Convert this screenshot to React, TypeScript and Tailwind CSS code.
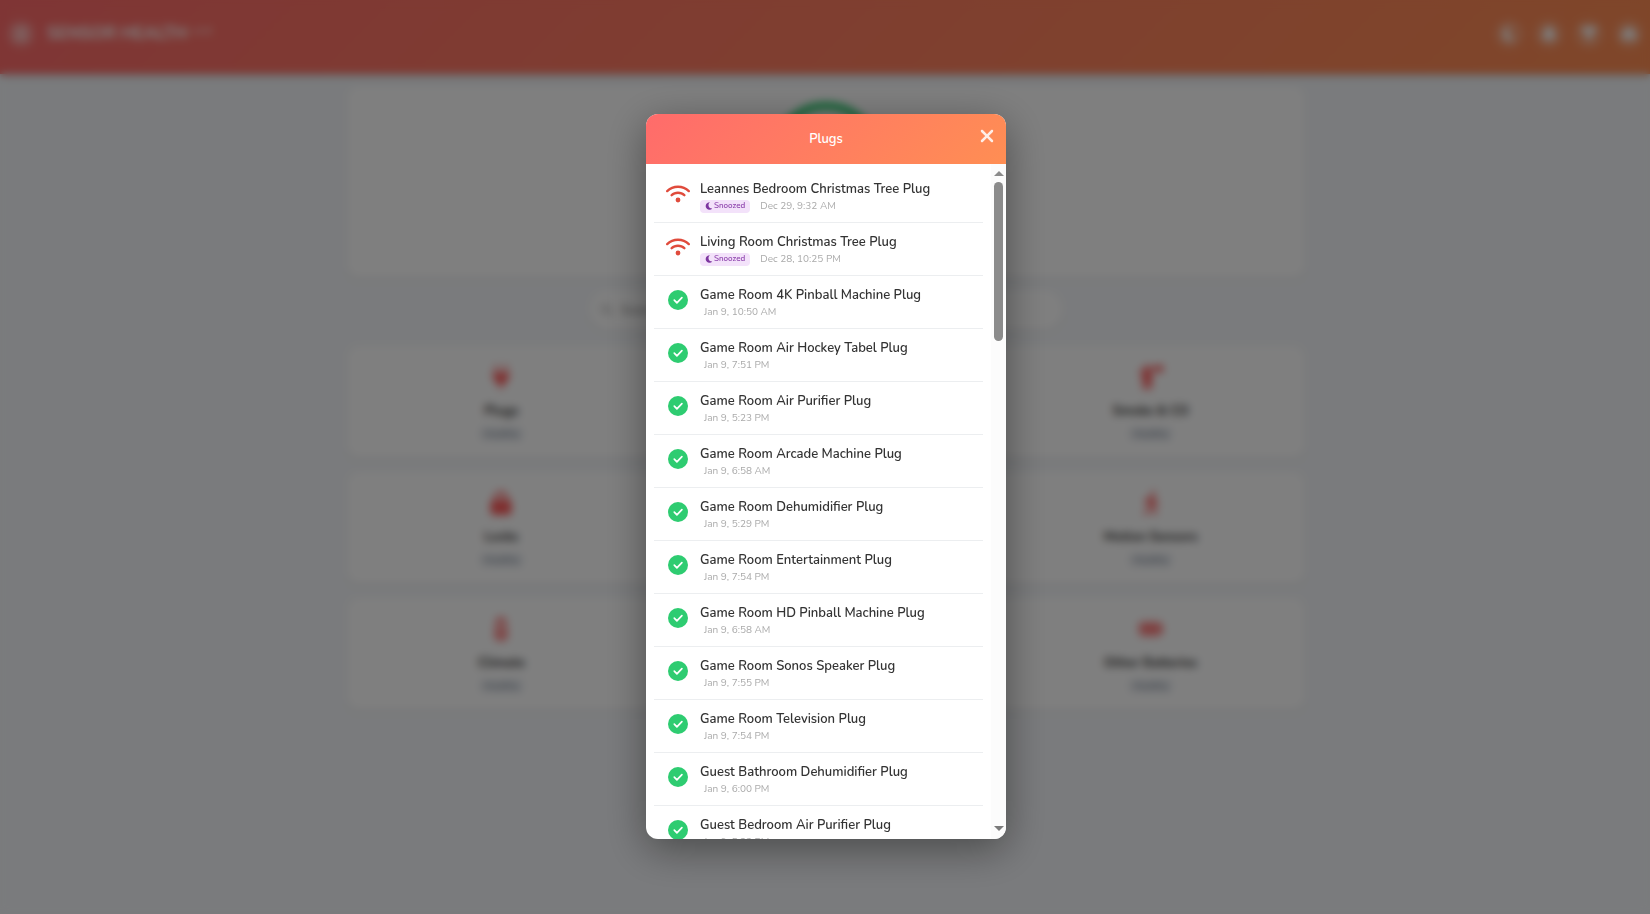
import type { ReactNode } from "react";
import {
  FaBars,
  FaBatteryFull,
  FaBell,
  FaFilter,
  FaHouse,
  FaLock,
  FaMagnifyingGlass,
  FaMoon,
  FaPersonWalking,
  FaPlug,
  FaFireExtinguisher,
  FaTemperatureHalf,
  FaWifi,
  FaXmark,
} from "react-icons/fa6";

type Plug = { name: string; seen: string; snoozed?: boolean };

const plugs: Plug[] = [
  { name: "Leannes Bedroom Christmas Tree Plug", seen: "Dec 29, 9:32 AM", snoozed: true },
  { name: "Living Room Christmas Tree Plug", seen: "Dec 28, 10:25 PM", snoozed: true },
  { name: "Game Room 4K Pinball Machine Plug", seen: "Jan 9, 10:50 AM" },
  { name: "Game Room Air Hockey Tabel Plug", seen: "Jan 9, 7:51 PM" },
  { name: "Game Room Air Purifier Plug", seen: "Jan 9, 5:23 PM" },
  { name: "Game Room Arcade Machine Plug", seen: "Jan 9, 6:58 AM" },
  { name: "Game Room Dehumidifier Plug", seen: "Jan 9, 5:29 PM" },
  { name: "Game Room Entertainment Plug", seen: "Jan 9, 7:54 PM" },
  { name: "Game Room HD Pinball Machine Plug", seen: "Jan 9, 6:58 AM" },
  { name: "Game Room Sonos Speaker Plug", seen: "Jan 9, 7:55 PM" },
  { name: "Game Room Television Plug", seen: "Jan 9, 7:54 PM" },
  { name: "Guest Bathroom Dehumidifier Plug", seen: "Jan 9, 6:00 PM" },
  { name: "Guest Bedroom Air Purifier Plug", seen: "Jan 9, 5:23 PM" },
];

function IconButton({ label, children }: { label: string; children: ReactNode }) {
  return (
    <button aria-label={label} className="flex size-7 items-center justify-center rounded-full bg-white/20 text-base text-white">
      {children}
    </button>
  );
}

function Category({ icon, name }: { icon: ReactNode; name: string }) {
  return (
    <button className="flex h-28 flex-col items-center justify-center rounded-xl bg-white shadow-sm">
      <span className="flex h-7 items-center text-2xl text-[#ff5c5c]">{icon}</span>
      <span className="mt-2 text-[13px] leading-6 font-bold text-[#333]">{name}</span>
      <span className="mt-1 rounded bg-[#eceff3] px-1 text-[10px] leading-[14px] text-[#6b7686]">Healthy</span>
    </button>
  );
}

function OnlineIcon() {
  return (
    <svg viewBox="0 0 20 20" role="img" aria-label="Online" className="size-5">
      <circle cx="10" cy="10" r="10" fill="#2ecc71" />
      <path d="M6.3 10.2 8.9 12.8 13.9 7.6" fill="none" stroke="#fff" strokeWidth="1.7" strokeLinecap="round" strokeLinejoin="round" />
    </svg>
  );
}

function SnoozeIcon() {
  return (
    <svg viewBox="0 0 16 16" aria-hidden="true" className="size-2 fill-[#7d35a0]">
      <path d="M9.6 0.6A7.5 7.5 0 1 0 14.6 13 7.4 7.4 0 0 1 7 6.6 7 7 0 0 1 9.6 0.6z" />
    </svg>
  );
}

function PlugRow({ plug }: { plug: Plug }) {
  return (
    <li className="flex h-[53px] shrink-0 items-start border-b border-[#eceef0] pt-2.5 pl-3">
      <span className="mt-1 mr-2.5 flex w-6 shrink-0 justify-center">
        {plug.snoozed ? (
          <FaWifi aria-label="Offline" className="h-5 w-6 text-[#e04b3c]" />
        ) : (
          <OnlineIcon />
        )}
      </span>
      <div className="min-w-0">
        <p className="truncate text-[13px] leading-[18px] font-semibold text-[#333]">{plug.name}</p>
        <div className="flex h-4 items-center">
          {plug.snoozed && (
            <span className="mr-1.5 flex h-[13px] items-center gap-px rounded bg-[#f3e2fa] px-[5px] text-[8px] font-semibold text-[#8e44ad]">
              <SnoozeIcon />
              Snoozed
            </span>
          )}
          <span className="pl-1 text-[10px] leading-4 text-[#aaa]">{plug.seen}</span>
        </div>
      </div>
    </li>
  );
}

export default function App() {
  return (
    <div className="h-screen overflow-hidden bg-[#f5f7fa] font-['Nunito','Open_Sans',sans-serif]">
      <header className="flex h-[74px] items-start justify-between bg-linear-135 from-[#ff6b6b] to-[#ff8e53] px-[7px] pt-5 shadow-md">
        <div className="flex items-center gap-3">
          <IconButton label="Menu">
            <FaBars />
          </IconButton>
          <h1 className="text-[17px] leading-7 font-bold text-white">
            SENSOR HEALTH <sup className="text-[10px] font-normal">v1.0</sup>
          </h1>
        </div>
        <div className="flex gap-3">
          <IconButton label="Dark mode"><FaMoon /></IconButton>
          <IconButton label="Alerts"><FaBell /></IconButton>
          <IconButton label="Filter"><FaFilter /></IconButton>
          <IconButton label="Home"><FaHouse /></IconButton>
        </div>
      </header>

      <main className="mx-auto max-w-[960px] pt-3 pl-0.5">
        <section className="flex h-48 justify-center rounded-xl bg-white pt-4 shadow-sm">
          <div className="size-[110px] rounded-full border-8 border-[#2ecc71]" />
        </section>
        <label className="mx-auto mt-3 flex h-10 max-w-[474px] items-center gap-2 rounded-full bg-white px-3 text-xs text-[#aaa] shadow-sm">
          <FaMagnifyingGlass />
          <input aria-label="Search" placeholder="Search devices" className="flex-1 placeholder:text-[#777]" />
        </label>
        <div className="mt-4 grid grid-cols-3 gap-x-4 gap-y-3.5">
          <Category icon={<FaPlug />} name="Plugs" />
          <div className="rounded-xl bg-white shadow-sm" />
          <Category icon={<FaFireExtinguisher />} name="Smoke & CO" />
          <Category icon={<FaLock />} name="Locks" />
          <div className="rounded-xl bg-white shadow-sm" />
          <Category icon={<FaPersonWalking />} name="Motion Sensors" />
          <Category icon={<FaTemperatureHalf />} name="Climate" />
          <div className="rounded-xl bg-white shadow-sm" />
          <Category icon={<FaBatteryFull />} name="Other Batteries" />
        </div>
      </main>

      <div className="fixed inset-0 flex justify-center bg-black/50 pt-[114px] pb-[75px] pl-0.5 backdrop-blur-xs">
        <div
          role="dialog"
          aria-modal="true"
          aria-labelledby="dialog-title"
          className="flex w-[360px] flex-col overflow-hidden rounded-xl bg-white shadow-[0_10px_40px_rgba(0,0,0,0.4)]"
        >
          <div className="relative flex h-[50px] shrink-0 items-center justify-center bg-linear-135 from-[#ff6b6b] to-[#ff8e53] pt-0.5">
            <h2 id="dialog-title" className="text-[13px] font-semibold text-white">Plugs</h2>
            <button aria-label="Close" className="absolute top-3 right-[9px] text-xl text-white/85">
              <FaXmark />
            </button>
          </div>
          <div className="flex min-h-0 flex-1">
            <ul className="flex min-w-0 flex-1 flex-col overflow-y-auto px-2 pt-1.5 [scrollbar-width:none]">
              {plugs.map((plug) => (
                <PlugRow key={plug.name} plug={plug} />
              ))}
            </ul>
            <div aria-hidden="true" className="flex w-[15px] shrink-0 flex-col items-center bg-[#fcfcfc] pt-[7px] pb-2">
              <svg viewBox="0 0 10 5" className="h-[5px] w-2.5 fill-[#8b8b8b]"><path d="M0 5 5 0l5 5z" /></svg>
              <div className="mt-1.5 h-[159px] w-[9px] rounded-full bg-[#8b8b8b]" />
              <svg viewBox="0 0 10 5" className="mt-auto h-[5px] w-2.5 fill-[#7b7b7b]"><path d="M0 0h10L5 5z" /></svg>
            </div>
          </div>
        </div>
      </div>
    </div>
  );
}
